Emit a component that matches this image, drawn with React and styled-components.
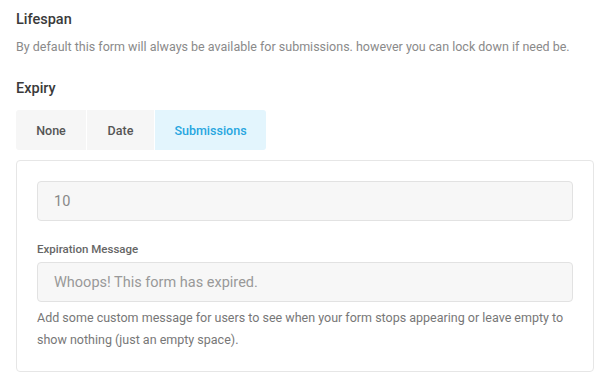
import React from "react";
import styled, { createGlobalStyle } from "styled-components";

const Global = createGlobalStyle`
  html, body { margin: 0; padding: 0; background: #fff; }
  body { font-family: Roboto, "Noto Sans", Arial, sans-serif; -webkit-font-smoothing: antialiased; }
  * { box-sizing: border-box; }
`;

const Page = styled.div`
  padding: 10px 16px 0 16px;
  width: 610px;
`;

const Title = styled.h3`
  margin: 0;
  font-size: 14.5px;
  font-weight: 500;
  color: #3a3a3a;
  line-height: 20px;
`;

const Desc = styled.p`
  margin: 7px 0 0 0;
  font-size: 12.5px;
  color: #8a8a8a;
  line-height: 20px;
`;

const SubTitle = styled(Title)`
  margin-top: 22px;
`;

const Tabs = styled.div`
  display: flex;
  margin-top: 11px;
  width: 250px;
  height: 40px;
  border-radius: 3px;
  overflow: hidden;
  gap: 1px;
`;

const Tab = styled.button`
  border: 0;
  padding: 0;
  width: ${(p) => p.$w}px;
  height: 40px;
  font-family: inherit;
  font-size: 12.5px;
  font-weight: 500;
  background: ${(p) => (p.$active ? "#e3f5fd" : "#f6f6f6")};
  color: ${(p) => (p.$active ? "#27a6e0" : "#555")};
  cursor: pointer;
`;

const Card = styled.div`
  margin-top: 10px;
  width: 578px;
  border: 1px solid #e6e6e6;
  border-radius: 4px;
  padding: 20px;
  height: 212px;
`;

const Input = styled.div`
  height: 40px;
  border: 1px solid #e2e2e2;
  border-radius: 4px;
  background: #f7f7f7;
  padding: 0 16px;
  display: flex;
  align-items: center;
  font-size: 14.5px;
  color: ${(p) => (p.$placeholder ? "#999" : "#888")};
`;

const Label = styled.div`
  margin-top: 20px;
  font-size: 11.5px;
  font-weight: 500;
  color: #666;
  line-height: 16px;
  margin-bottom: 5px;
`;

const Help = styled.p`
  margin: 5px 0 0 0;
  font-size: 12.5px;
  line-height: 22px;
  color: #777;
`;

export default function App() {
  return (
    <Page>
      <Global />
      <Title>Lifespan</Title>
      <Desc>By default this form will always be available for submissions. however you can lock down if need be.</Desc>
      <SubTitle>Expiry</SubTitle>
      <Tabs>
        <Tab $w={70}>None</Tab>
        <Tab $w={67}>Date</Tab>
        <Tab $w={111} $active>Submissions</Tab>
      </Tabs>
      <Card>
        <Input>10</Input>
        <Label>Expiration Message</Label>
        <Input $placeholder>Whoops! This form has expired.</Input>
        <Help>
          Add some custom message for users to see when your form stops appearing or leave empty to show nothing (just an empty space).
        </Help>
      </Card>
    </Page>
  );
}
